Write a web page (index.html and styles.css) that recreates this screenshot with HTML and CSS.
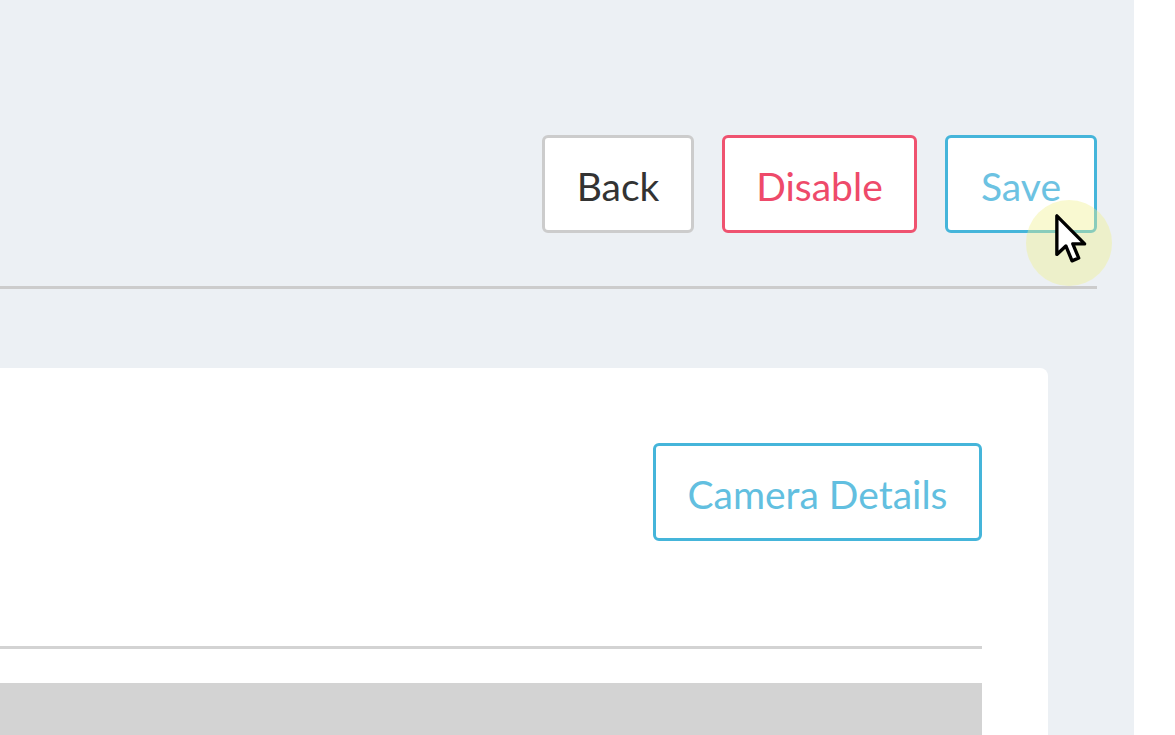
FILE: index.html
```html
<!DOCTYPE html>
<html>
<head>
<meta charset="utf-8">
<link rel="stylesheet" href="styles.css">
</head>
<body>
<div class="page">
  <main class="main">
    <header class="toolbar">
      <button class="btn btn-default">Back</button>
      <button class="btn btn-danger">Disable</button>
      <button class="btn btn-info">Save</button>
    </header>
    <hr class="rule">
    <section class="card">
      <div class="card-head">
        <button class="btn btn-info btn-camera">Camera Details</button>
      </div>
      <hr class="card-rule">
      <div class="table-head"></div>
    </section>
  </main>
  <aside class="side"></aside>
</div>
<div class="cursor-halo"></div>
<svg class="cursor" width="36" height="54" viewBox="0 0 14 21">
  <path d="M1.5 1.5 L1.5 16.5 L5 13.2 L7.4 19 L10 17.9 L7.7 12.4 L12.3 12.4 Z" fill="#fff" stroke="#000" stroke-width="1.3" stroke-linejoin="round"/>
</svg>
</body>
</html>
```

FILE: styles.css
```css
html, body {
  margin: 0;
  padding: 0;
  height: 100%;
  overflow: hidden;
  background: #ffffff;
  font-family: "Lato", "Open Sans", sans-serif;
}

.page {
  display: flex;
  height: 735px;
}

.main {
  width: 1134px;
  flex: none;
  background: #ecf0f4;
  display: flex;
  flex-direction: column;
}

.side {
  flex: 1;
  background: #ffffff;
}

.toolbar {
  display: flex;
  justify-content: flex-end;
  gap: 28px;
  padding: 135px 37px 0 0;
  height: 98px;
}

.btn {
  box-sizing: border-box;
  height: 98px;
  border: 3px solid #cccccc;
  border-radius: 6px;
  background: #ffffff;
  font-family: "Lato", "Open Sans", sans-serif;
  font-size: 39px;
  line-height: 1;
  padding: 4px 0 0 0;
  color: #333333;
  cursor: pointer;
}

.btn-default {
  width: 152px;
}

.btn-danger {
  width: 195px;
  border-color: #ef5370;
  color: #ee4a6a;
}

.btn-info {
  width: 152px;
  border-color: #45b5da;
  color: #6cc2e2;
}

.rule {
  margin: 53px 37px 0 0;
  border: 0;
  height: 3px;
  background: #cccccc;
}

.card {
  margin-top: 79px;
  width: 1048px;
  flex: 1;
  background: #ffffff;
  border-top-right-radius: 8px;
  padding: 75px 66px 0 0;
  box-sizing: border-box;
  display: flex;
  flex-direction: column;
}

.card-head {
  display: flex;
  justify-content: flex-end;
}

.btn-camera {
  width: 329px;
  color: #62bfe0;
}

.card-rule {
  margin: 105px 0 0 0;
  border: 0;
  height: 3px;
  background: #d3d3d3;
}

.table-head {
  margin-top: 34px;
  flex: 1;
  background: #d3d3d3;
}

.cursor-halo {
  position: absolute;
  left: 1026px;
  top: 200px;
  width: 86px;
  height: 86px;
  border-radius: 50%;
  background: rgba(240, 240, 140, 0.4);
}

.cursor {
  position: absolute;
  left: 1053px;
  top: 212px;
}
```
